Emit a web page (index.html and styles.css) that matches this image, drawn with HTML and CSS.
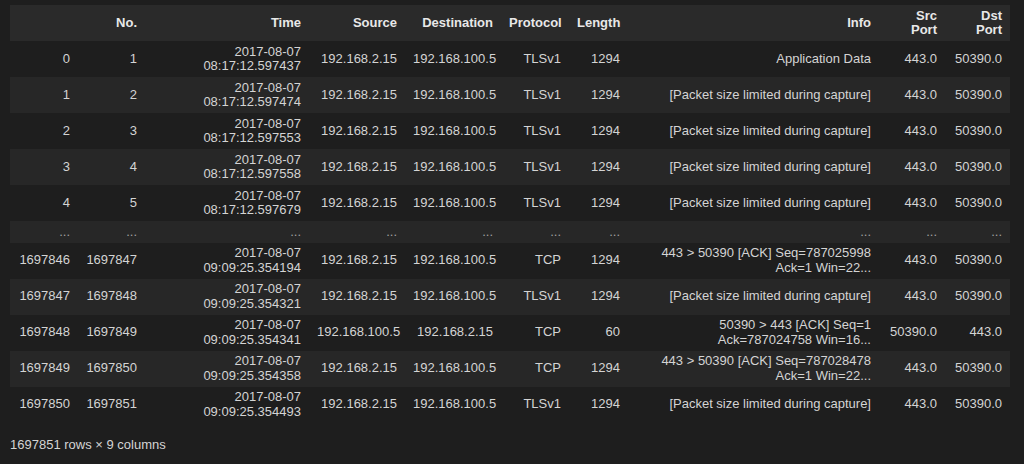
FILE: index.html
```html
<!DOCTYPE html>
<html>
<head>
<meta charset="utf-8">
<link rel="stylesheet" href="styles.css">
</head>
<body>
<div class="output">
  <table class="dataframe">
    <colgroup>
      <col class="c-idx"><col class="c-no"><col class="c-time"><col class="c-src"><col class="c-dst">
      <col class="c-proto"><col class="c-len"><col class="c-info"><col class="c-sport"><col class="c-dport">
    </colgroup>
    <thead>
      <tr>
        <th></th><th>No.</th><th>Time</th><th>Source</th><th>Destination</th><th>Protocol</th><th>Length</th><th>Info</th><th>Src Port</th><th>Dst Port</th>
      </tr>
    </thead>
    <tbody>
      <tr><th>0</th><td>1</td><td>2017-08-07 08:17:12.597437</td><td>192.168.2.15</td><td>192.168.100.5</td><td>TLSv1</td><td>1294</td><td>Application Data</td><td>443.0</td><td>50390.0</td></tr>
      <tr><th>1</th><td>2</td><td>2017-08-07 08:17:12.597474</td><td>192.168.2.15</td><td>192.168.100.5</td><td>TLSv1</td><td>1294</td><td>[Packet size limited during capture]</td><td>443.0</td><td>50390.0</td></tr>
      <tr><th>2</th><td>3</td><td>2017-08-07 08:17:12.597553</td><td>192.168.2.15</td><td>192.168.100.5</td><td>TLSv1</td><td>1294</td><td>[Packet size limited during capture]</td><td>443.0</td><td>50390.0</td></tr>
      <tr><th>3</th><td>4</td><td>2017-08-07 08:17:12.597558</td><td>192.168.2.15</td><td>192.168.100.5</td><td>TLSv1</td><td>1294</td><td>[Packet size limited during capture]</td><td>443.0</td><td>50390.0</td></tr>
      <tr><th>4</th><td>5</td><td>2017-08-07 08:17:12.597679</td><td>192.168.2.15</td><td>192.168.100.5</td><td>TLSv1</td><td>1294</td><td>[Packet size limited during capture]</td><td>443.0</td><td>50390.0</td></tr>
      <tr class="ellipsis"><th>...</th><td>...</td><td>...</td><td>...</td><td>...</td><td>...</td><td>...</td><td>...</td><td>...</td><td>...</td></tr>
      <tr><th>1697846</th><td>1697847</td><td>2017-08-07 09:09:25.354194</td><td>192.168.2.15</td><td>192.168.100.5</td><td>TCP</td><td>1294</td><td>443 &gt; 50390 [ACK] Seq=787025998 Ack=1 Win=22...</td><td>443.0</td><td>50390.0</td></tr>
      <tr><th>1697847</th><td>1697848</td><td>2017-08-07 09:09:25.354321</td><td>192.168.2.15</td><td>192.168.100.5</td><td>TLSv1</td><td>1294</td><td>[Packet size limited during capture]</td><td>443.0</td><td>50390.0</td></tr>
      <tr><th>1697848</th><td>1697849</td><td>2017-08-07 09:09:25.354341</td><td>192.168.100.5</td><td>192.168.2.15</td><td>TCP</td><td>60</td><td>50390 &gt; 443 [ACK] Seq=1 Ack=787024758 Win=16...</td><td>50390.0</td><td>443.0</td></tr>
      <tr><th>1697849</th><td>1697850</td><td>2017-08-07 09:09:25.354358</td><td>192.168.2.15</td><td>192.168.100.5</td><td>TCP</td><td>1294</td><td>443 &gt; 50390 [ACK] Seq=787028478 Ack=1 Win=22...</td><td>443.0</td><td>50390.0</td></tr>
      <tr><th>1697850</th><td>1697851</td><td>2017-08-07 09:09:25.354493</td><td>192.168.2.15</td><td>192.168.100.5</td><td>TLSv1</td><td>1294</td><td>[Packet size limited during capture]</td><td>443.0</td><td>50390.0</td></tr>
    </tbody>
  </table>
  <p class="shape">1697851 rows × 9 columns</p>
</div>
</body>
</html>
```

FILE: styles.css
```css
html, body {
  margin: 0;
  padding: 0;
  background: #1e1e1e;
}

body {
  font-family: "Liberation Sans", Arial, sans-serif;
  font-size: 13px;
  line-height: 14.5px;
  color: #d4d4d4;
}

.output {
  padding: 5px 14px 0 10px;
}

.dataframe {
  width: 1000px;
  table-layout: fixed;
  border-collapse: collapse;
  border-spacing: 0;
}

.c-idx { width: 68px; }
.c-no { width: 67px; }
.c-time { width: 164px; }
.c-src { width: 96px; }
.c-dst { width: 96px; }
.c-proto { width: 68px; }
.c-len { width: 59px; }
.c-info { width: 251px; }
.c-sport { width: 66px; }
.c-dport { width: 65px; }

.dataframe th,
.dataframe td {
  padding: 3.5px 8px;
  text-align: right;
  vertical-align: middle;
  font-weight: normal;
  border: none;
}

.dataframe thead tr {
  background: #2a2a2a;
}

.dataframe thead th {
  font-weight: bold;
  color: #e8e8e8;
}

.dataframe tbody tr:nth-child(even) {
  background: #272727;
}

.dataframe tbody th,
.dataframe tbody td {
  color: #d4d4d4;
}

.dataframe tbody tr.ellipsis th,
.dataframe tbody tr.ellipsis td {
  color: #a0a0a0;
}

.shape {
  margin: 15px 0 0 0;
  color: #d4d4d4;
}
```
